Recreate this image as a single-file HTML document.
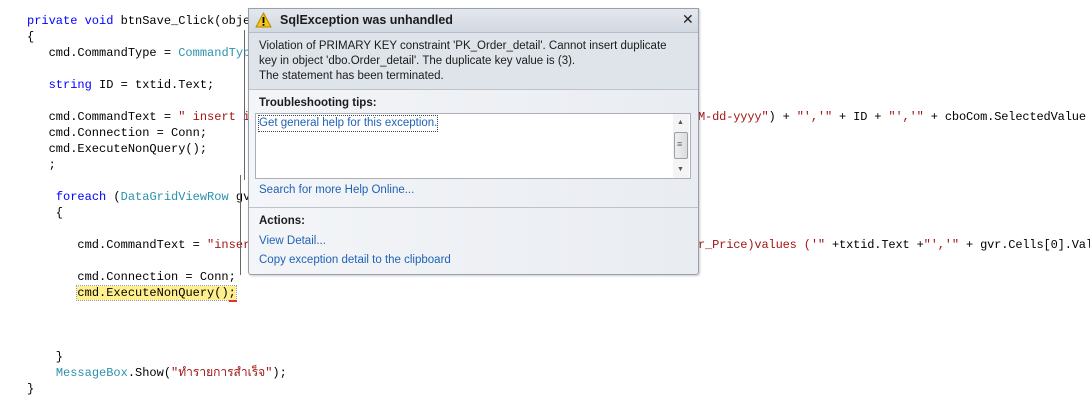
<!DOCTYPE html>
<html><head><meta charset="utf-8"><style>
body{margin:0;width:1090px;height:400px;background:#fff;position:relative;overflow:hidden}
.c{position:absolute;font-family:"Liberation Mono",monospace;font-size:12px;line-height:16px;white-space:pre;color:#000}
.k{color:#0000ff}.t{color:#2b91af}.s{color:#a31515}
.d{position:absolute;font-family:"Liberation Sans",sans-serif;font-size:11.5px;white-space:pre;line-height:15px}
.l{color:#1e62b6}
</style></head><body>
<div class="c" style="left:27px;top:13px"><span class="k">private void</span> btnSave_Click(objec
{
   cmd.CommandType = <span class="t">CommandType</span>

   <span class="k">string</span> ID = txtid.Text;

   cmd.CommandText = <span class="s">" insert in</span>
   cmd.Connection = Conn;
   cmd.ExecuteNonQuery();
   ;

    <span class="k">foreach</span> (<span class="t">DataGridViewRow</span> gvr
    {

       cmd.CommandText = <span class="s">"inser</span>

       cmd.Connection = Conn;
       <span style="background:#ffef8e;outline:1px dotted #999">cmd.ExecuteNonQuery();</span>



    }
    <span class="t">MessageBox</span>.Show(<span class="s">"ทำรายการสำเร็จ"</span>);
}</div>
<div style="position:absolute;left:229px;top:300px;width:8px;height:2px;background:#d33"></div>
<div class="c" style="left:698px;top:109px;letter-spacing:-0.15px"><span class="s">M-dd-yyyy"</span>) + <span class="s">"','"</span> + ID + <span class="s">"','"</span> + cboCom.SelectedValue</div>
<div class="c" style="left:698px;top:237px;letter-spacing:-0.15px"><span class="s">r_Price)</span><span class="s">values ('"</span> +txtid.Text +<span class="s">"','"</span> + gvr.Cells[0].Val</div>
<div style="position:absolute;left:244px;top:30px;width:1px;height:150px;background:#666"></div>
<div style="position:absolute;left:240px;top:175px;width:1px;height:100px;background:#666"></div>
<div style="position:absolute;left:248px;top:8px;width:449px;height:265px;border:1px solid #98a0ac;border-radius:0 0 3px 3px;background:linear-gradient(90deg,#f3f5f8,#e9ecf1);box-shadow:1px 1px 2px rgba(0,0,0,.2)">
 <div style="position:absolute;left:0;top:0;right:0;height:23px;background:linear-gradient(#e4e8ee,#d2d8e1);border-bottom:1px solid #b6bdc8"></div>
 <svg style="position:absolute;left:6px;top:3px" width="17" height="16" viewBox="0 0 17 16"><path d="M8.5 1L16 15H1z" fill="#f5c518" stroke="#b88a00" stroke-width="1"/><rect x="7.6" y="5" width="1.8" height="6" fill="#000"/><rect x="7.6" y="12" width="1.8" height="1.8" fill="#000"/></svg>
 <div class="d" style="left:31px;top:4px;font-weight:bold;font-size:12.5px;color:#1b1b1b">SqlException was unhandled</div>
 <div class="d" style="left:433px;top:3px;font-size:14px;color:#222">✕</div>
 <div style="position:absolute;left:0;top:24px;right:0;height:56px;background:#dfe4eb;border-bottom:1px solid #bcc3cd"></div>
 <div class="d" style="left:10px;top:30px;color:#1b1b1b">Violation of PRIMARY KEY constraint 'PK_Order_detail'. Cannot insert duplicate
key in object 'dbo.Order_detail'. The duplicate key value is (3).
The statement has been terminated.</div>
 <div class="d" style="left:10px;top:87px;font-weight:bold;color:#1b1b1b">Troubleshooting tips:</div>
 <div style="position:absolute;left:6px;top:104px;width:434px;height:64px;background:#fff;border:1px solid #a9b0ba"></div>
 <div class="d l" style="left:10px;top:107px;outline:1px dotted #444">Get general help for this exception.</div>
 <div style="position:absolute;left:424px;top:105px;width:16px;height:64px;background:#f4f4f4"></div>
 <div class="d" style="left:428px;top:106px;font-size:7px;color:#555">▲</div>
 <div style="position:absolute;left:425px;top:123px;width:12px;height:25px;border:1px solid #9aa0a8;border-radius:2px;background:linear-gradient(90deg,#eee,#ddd)"></div>
 <div class="d" style="left:428px;top:128px;font-size:9px;color:#666">≡</div>
 <div class="d" style="left:428px;top:153px;font-size:7px;color:#555">▼</div>
 <div class="d l" style="left:10px;top:174px">Search for more Help Online...</div>
 <div style="position:absolute;left:0;top:198px;right:0;height:1px;background:#bcc3cd"></div>
 <div class="d" style="left:10px;top:205px;font-weight:bold;color:#1b1b1b">Actions:</div>
 <div class="d l" style="left:10px;top:225px">View Detail...</div>
 <div class="d l" style="left:10px;top:244px">Copy exception detail to the clipboard</div>
</div>
</body></html>
